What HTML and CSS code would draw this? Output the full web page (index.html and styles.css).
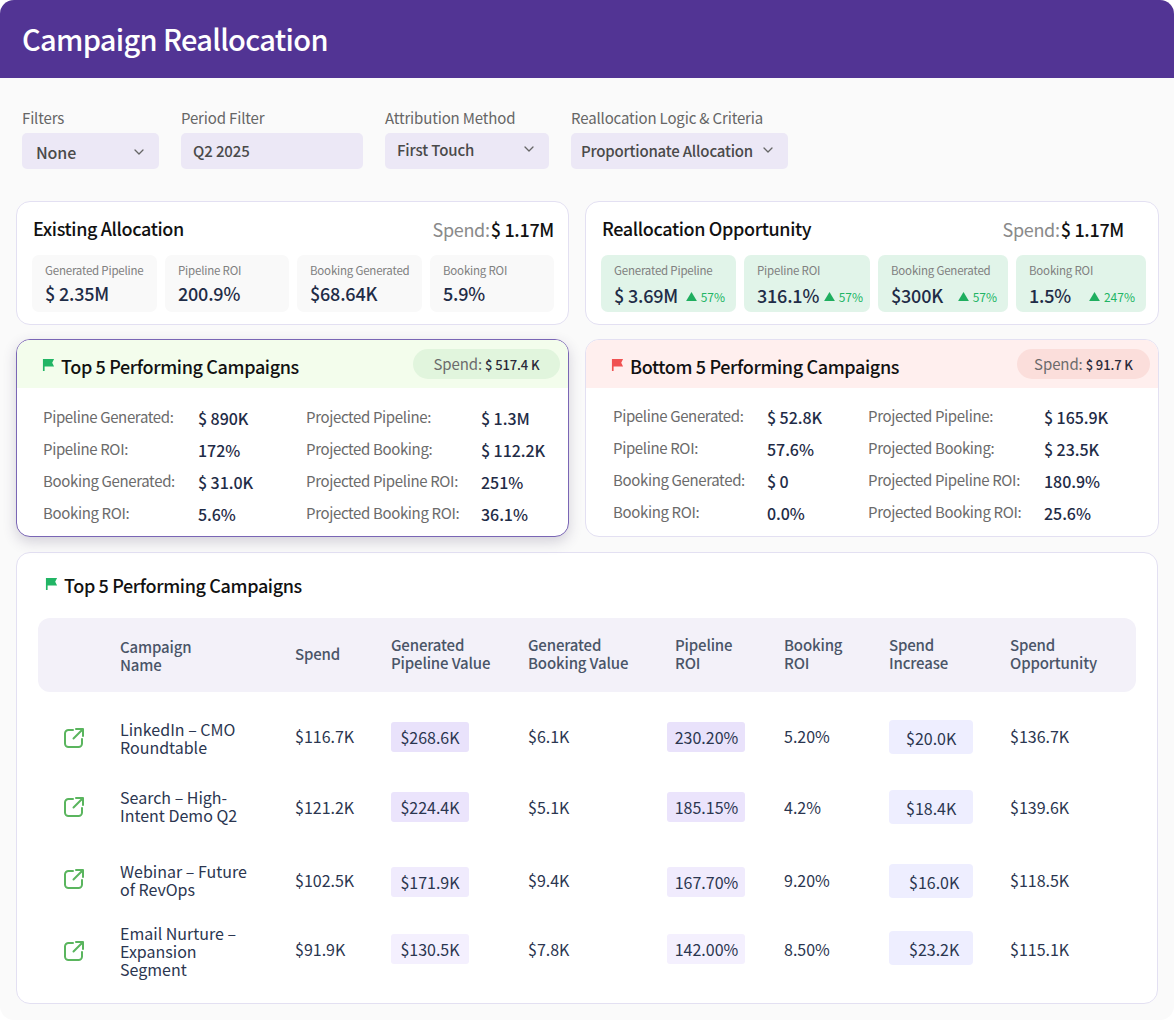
FILE: index.html
```html
<!DOCTYPE html>
<html lang="en">
<head>
<meta charset="utf-8">
<title>Campaign Reallocation</title>
<link rel="stylesheet" href="styles.css">
</head>
<body>
<svg class="defs" width="0" height="0" aria-hidden="true">
  <defs>
    <symbol id="flag" viewBox="0 0 14 14"><path d="M1 0.5H13L11 4.5L13 8.5H2.8V13.5H1Z" fill="currentColor"/></symbol>
    <symbol id="link" viewBox="0 0 22 22"><path d="M10 3H5.5A3.5 3.5 0 0 0 2 6.5V16.5A3.5 3.5 0 0 0 5.5 20H15.5A3.5 3.5 0 0 0 19 16.5V12M13 2H20V9M20 2L10.5 11.5" fill="none" stroke="currentColor" stroke-width="2" stroke-linecap="round" stroke-linejoin="round"/></symbol>
    <symbol id="chev" viewBox="0 0 12 8"><path d="M2 2L6 6L10 2" fill="none" stroke="currentColor" stroke-width="1.3" stroke-linecap="round" stroke-linejoin="round"/></symbol>
    <symbol id="up" viewBox="0 0 12 10"><path d="M6 0L12 10H0Z" fill="currentColor"/></symbol>
  </defs>
</svg>
<div class="page">
  <header class="topbar"><h1>Campaign Reallocation</h1></header>

  <section class="filters">
    <div class="filter f-none"><label>Filters</label><div class="select big"><span>None</span><svg class="chev"><use href="#chev"/></svg></div></div>
    <div class="filter f-period"><label>Period Filter</label><div class="select"><span>Q2 2025</span></div></div>
    <div class="filter f-attr"><label>Attribution Method</label><div class="select"><span>First Touch</span><svg class="chev"><use href="#chev"/></svg></div></div>
    <div class="filter f-logic"><label>Reallocation Logic &amp; Criteria</label><div class="select tight"><span>Proportionate Allocation</span><svg class="chev"><use href="#chev"/></svg></div></div>
  </section>

  <section class="cols">
    <article class="card summary">
      <div class="summary-head"><h2>Existing Allocation</h2><div class="spend"><span>Spend:</span><b>$ 1.17M</b></div></div>
      <div class="tiles existing">
        <div class="tile"><small>Generated Pipeline</small><strong>$ 2.35M</strong></div>
        <div class="tile"><small>Pipeline ROI</small><strong>200.9%</strong></div>
        <div class="tile"><small>Booking Generated</small><strong>$68.64K</strong></div>
        <div class="tile"><small>Booking ROI</small><strong>5.9%</strong></div>
      </div>
    </article>
    <article class="card summary">
      <div class="summary-head opp"><h2>Reallocation Opportunity</h2><div class="spend"><span>Spend:</span><b>$ 1.17M</b></div></div>
      <div class="tiles realloc">
        <div class="tile"><small>Generated Pipeline</small><div class="val"><strong>$ 3.69M</strong><em><svg class="up"><use href="#up"/></svg>57%</em></div></div>
        <div class="tile snug"><small>Pipeline ROI</small><div class="val"><strong>316.1%</strong><em><svg class="up"><use href="#up"/></svg>57%</em></div></div>
        <div class="tile"><small>Booking Generated</small><div class="val"><strong>$300K</strong><em><svg class="up"><use href="#up"/></svg>57%</em></div></div>
        <div class="tile"><small>Booking ROI</small><div class="val"><strong>1.5%</strong><em><svg class="up"><use href="#up"/></svg>247%</em></div></div>
      </div>
    </article>
  </section>

  <section class="cols second">
    <article class="card perf top">
      <div class="perf-head">
        <h2><svg class="flag green"><use href="#flag"/></svg>Top 5 Performing Campaigns</h2>
        <div class="pill"><span>Spend:</span><b>$ 517.4 K</b></div>
      </div>
      <dl class="facts">
        <dt>Pipeline Generated:</dt><dd>$ 890K</dd><dt>Projected Pipeline:</dt><dd>$ 1.3M</dd>
        <dt>Pipeline ROI:</dt><dd>172%</dd><dt>Projected Booking:</dt><dd>$ 112.2K</dd>
        <dt>Booking Generated:</dt><dd>$ 31.0K</dd><dt>Projected Pipeline ROI:</dt><dd>251%</dd>
        <dt>Booking ROI:</dt><dd>5.6%</dd><dt>Projected Booking ROI:</dt><dd>36.1%</dd>
      </dl>
    </article>
    <article class="card perf bottom">
      <div class="perf-head">
        <h2><svg class="flag red"><use href="#flag"/></svg>Bottom 5 Performing Campaigns</h2>
        <div class="pill"><span>Spend:</span><b>$ 91.7 K</b></div>
      </div>
      <dl class="facts">
        <dt>Pipeline Generated:</dt><dd>$ 52.8K</dd><dt>Projected Pipeline:</dt><dd>$ 165.9K</dd>
        <dt>Pipeline ROI:</dt><dd>57.6%</dd><dt>Projected Booking:</dt><dd>$ 23.5K</dd>
        <dt>Booking Generated:</dt><dd>$ 0</dd><dt>Projected Pipeline ROI:</dt><dd>180.9%</dd>
        <dt>Booking ROI:</dt><dd>0.0%</dd><dt>Projected Booking ROI:</dt><dd>25.6%</dd>
      </dl>
    </article>
  </section>

  <section class="card campaigns">
    <h2><svg class="flag green"><use href="#flag"/></svg>Top 5 Performing Campaigns</h2>
    <div class="row head">
      <div></div><div class="low">Campaign<br>Name</div><div>Spend</div><div>Generated<br>Pipeline Value</div><div>Generated<br>Booking Value</div><div class="in">Pipeline<br>ROI</div><div>Booking<br>ROI</div><div>Spend<br>Increase</div><div>Spend<br>Opportunity</div>
    </div>
    <div class="row r1">
      <svg class="link"><use href="#link"/></svg><div class="name">LinkedIn – CMO Roundtable</div><div>$116.7K</div><div class="ch"><span class="chip h1">$268.6K</span></div><div>$6.1K</div><div class="ch"><span class="chip pct h1">230.20%</span></div><div>5.20%</div><div class="ic"><span class="inc">$20.0K</span></div><div>$136.7K</div>
    </div>
    <div class="row r2">
      <svg class="link"><use href="#link"/></svg><div class="name">Search – High-Intent Demo Q2</div><div>$121.2K</div><div class="ch"><span class="chip h2">$224.4K</span></div><div>$5.1K</div><div class="ch"><span class="chip pct h2">185.15%</span></div><div>4.2%</div><div class="ic"><span class="inc">$18.4K</span></div><div>$139.6K</div>
    </div>
    <div class="row r3">
      <svg class="link"><use href="#link"/></svg><div class="name">Webinar – Future of RevOps</div><div>$102.5K</div><div class="ch"><span class="chip h3">$171.9K</span></div><div>$9.4K</div><div class="ch"><span class="chip pct h3">167.70%</span></div><div>9.20%</div><div class="ic"><span class="inc off">$16.0K</span></div><div>$118.5K</div>
    </div>
    <div class="row r4">
      <svg class="link"><use href="#link"/></svg><div class="name">Email Nurture – Expansion Segment</div><div>$91.9K</div><div class="ch"><span class="chip h4">$130.5K</span></div><div>$7.8K</div><div class="ch"><span class="chip pct h4">142.00%</span></div><div>8.50%</div><div class="ic"><span class="inc off">$23.2K</span></div><div>$115.1K</div>
    </div>
  </section>
</div>
</body>
</html>
```
FILE: styles.css
```css
* { box-sizing: border-box; }
html, body { margin: 0; padding: 0; background: #fff; }
body { font-family: "Noto Sans CJK SC", "Noto Sans", sans-serif; color: #1f2a44; width: 1174px; }
.defs { display: block; height: 0; }
.page { background: #fafafa; height: 1020px; border-radius: 14px; overflow: hidden; }
h1, h2, dl, dd, dt { margin: 0; }

.topbar { height: 78px; background: #523494; padding: 0 22px 2px; display: flex; align-items: center; }
.topbar h1 { font-size: 29px; line-height: 40px; font-weight: 500; color: #fff; letter-spacing: -.68px; }

.filters { display: flex; gap: 22px; padding: 29px 22px 0; height: 123px; }
.filter label { display: block; font-size: 15px; line-height: 22px; color: #666; margin-bottom: 4px; letter-spacing: -.15px; white-space: nowrap; }
.select { height: 36px; border-radius: 5px; background: #ece8f6; display: flex; align-items: center; justify-content: space-between; padding: 0 14px 2px 12px; font-size: 15px; font-weight: 500; color: #4a4a4a; letter-spacing: -.12px; white-space: nowrap; }
.select.big { font-size: 16px; padding: 2px 14px 0 14px; }
.f-attr .select { padding-bottom: 4px; }
.select.tight { padding: 0 14px 2px 10px; letter-spacing: -.2px; }
.f-none { width: 137px; } .f-period { width: 182px; } .f-attr { width: 164px; } .f-logic { width: 217px; }
.chev { width: 12px; height: 8px; color: #666; }

.cols { display: grid; grid-template-columns: 553px 574px; gap: 16px; padding: 0 16px; }
.second { margin-top: 14px; }
.card { background: #fff; border: 1px solid #e3e0f2; border-radius: 14px; }

.summary { height: 124px; padding: 12px 12px 0 15px; }
.summary-head { display: flex; justify-content: space-between; align-items: center; height: 30px; padding: 0 2px 0 1px; margin-bottom: 11px; }
.summary-head.opp { padding-right: 22px; }
.summary h2 { margin-top: -3px; }
.summary h2, .perf h2, .campaigns h2 { font-size: 18px; line-height: 28px; font-weight: 500; color: #111; letter-spacing: -.36px; white-space: nowrap; }
.spend { font-size: 18px; line-height: 28px; display: flex; gap: 1px; letter-spacing: -.3px; }
.spend span { color: #8a8a8a; }
.spend b { font-weight: 500; color: #111; }

.tiles { display: grid; gap: 8px; height: 57px; }
.existing { grid-template-columns: 125px 124px 125px 124px; }
.realloc { grid-template-columns: 135px 126px 130px 130px; }
.tile { border-radius: 7px; background: #f9f9f9; padding: 6px 12px 0 13px; white-space: nowrap; }
.tile.snug { padding-right: 8px; }
.realloc .tile { background: #e1f4e9; }
.tile small { display: block; font-size: 11.5px; line-height: 18px; color: #808080; letter-spacing: -.2px; }
.tile strong { display: block; font-size: 18px; line-height: 26px; font-weight: 500; color: #1f2c47; margin-top: 1px; letter-spacing: -.2px; }
.val { display: flex; justify-content: space-between; align-items: center; margin-top: 3px; }
.val strong { margin-top: 0; }
.val em { font-style: normal; font-size: 12px; color: #22b565; display: flex; align-items: center; gap: 4px; margin-top: 2px; margin-right: -1px; }
.up { width: 11px; height: 9px; color: #1fae5f; }

.perf { height: 198px; overflow: hidden; }
.perf.top { border-color: #7a66b5; box-shadow: 0 5px 14px rgba(60, 50, 90, .2); }
.perf-head { height: 48px; display: flex; align-items: center; justify-content: space-between; padding: 0 8px 0 25px; }
.top .perf-head { background: #f3fdec; }
.bottom .perf-head { background: #ffefee; }
.perf-head h2 { display: flex; align-items: center; gap: 6px; padding-top: 4px; }
.flag { width: 13px; height: 14px; margin-top: -3px; flex: none; }
.green { color: #22b565; }
.red { color: #f05252; }
.pill { height: 30px; border-radius: 15px; display: flex; align-items: center; justify-content: center; gap: 3px; font-size: 15px; white-space: nowrap; letter-spacing: -.1px; }
.top .pill { background: #e1f5dd; width: 147px; }
.bottom .pill { background: #fbdedb; width: 133px; }
.pill span { color: #6b6b6b; margin-top: -2px; }
.pill b { font-size: 13px; font-weight: 500; color: #2a2a3a; }

.facts { display: grid; padding: 14px 0 0 26px; grid-auto-rows: 32px; align-items: center; }
.top .facts { grid-template-columns: 155px 108px 175px 1fr; }
.bottom .facts { grid-template-columns: 154px 101px 176px 1fr; padding: 13px 0 0 27px; }
.facts dt { font-size: 15px; line-height: 22px; color: #6b6b6b; margin-top: -2px; letter-spacing: -.36px; white-space: nowrap; }
.facts dd { font-size: 16px; line-height: 22px; font-weight: 500; color: #1f2c47; letter-spacing: -.05px; }

.campaigns { margin: 15px 16px 0; height: 452px; padding: 19px 21px 0; }
.campaigns h2 { display: flex; align-items: center; gap: 6px; padding-left: 7px; height: 28px; margin: -1px 0 19px; }
.row { display: grid; grid-template-columns: 82px 175px 96px 137px 139px 117px 105px 121px 1fr; align-items: center; font-size: 16px; line-height: 18px; color: #2b3650; }
.row > div { margin-top: -2px; }
.row.head { height: 74px; background: #f3f1f9; border-radius: 12px; font-size: 15px; font-weight: 500; color: #4a5568; margin-bottom: 8px; letter-spacing: -.15px; padding-bottom: 2px; }
.row.head > div { margin-top: 0; }
.row.head > .in { padding-left: 8px; }
.row.head > .low { margin-top: 3px; }
.name { padding-right: 38px; }
.r1 { height: 74px; } .r2 { height: 68px; } .r3 { height: 78px; } .r4 { height: 60px; }
.row.r1 > .name { margin-top: 2px; } .row.r2 > .name { margin-top: -4px; } .row.r3 > .name { margin-top: -2px; } .row.r4 > .name { margin-top: 2px; }
.row.r1 > .ch, .row.r1 > .ic, .row.r3 > .ic { margin-top: 0; }
.row.r3 > .ch { margin-top: 2px; }
.row.r4 > .ic { margin-top: -4px; }
.link { width: 22px; height: 22px; color: #5ab55e; margin-left: 25px; }
.r1 .link { margin-top: 2px; } .r2 .link { margin-top: -2px; } .r3 .link { margin-top: -4px; } .r4 .link { margin-top: 2px; }
.chip { display: inline-block; height: 30px; line-height: 30px; width: 78px; border-radius: 3px; text-align: center; }
.chip.pct { text-indent: 1px; }
.h1 { background: #e9e2fb; } .h2 { background: #ebe4fc; } .h3 { background: #f0ebfd; } .h4 { background: #f4f0fe; }
.inc { display: block; width: 84px; height: 34px; line-height: 36px; padding-left: 17px; border-radius: 4px; background: #eeeeff; }
.inc.off { padding-left: 20px; }
```
